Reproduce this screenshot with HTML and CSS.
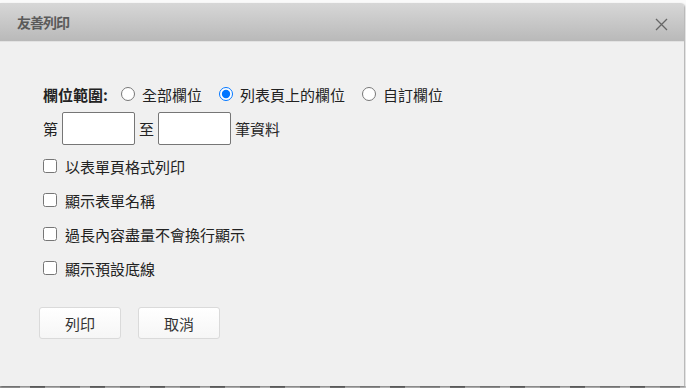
FILE: index.html
```html
<!DOCTYPE html>
<html lang="zh-Hant">
<head>
  <meta charset="UTF-8">
  <title>友善列印</title>
  <link rel="stylesheet" href="styles.css">
</head>
<body>
  <div class="dialog">
    <div class="dlg-head">
      <span class="dlg-title">友善列印</span>
      <span class="dlg-close">
        <svg width="13" height="13" viewBox="0 0 13 13"><path d="M1 1L12 12M12 1L1 12" stroke="#666" stroke-width="1.3" fill="none"/></svg>
      </span>
    </div>

    <div class="dlg-body">
      <div class="row">
        <b class="lbl">欄位範圍:</b>
        <label class="opt"><input type="radio" name="range"> 全部欄位</label>
        <label class="opt"><input type="radio" name="range" checked> 列表頁上的欄位</label>
        <label class="opt"><input type="radio" name="range"> 自訂欄位</label>
      </div>

      <div class="row rows">
        第 <input type="text" class="num"> 至 <input type="text" class="num"> 筆資料
      </div>

      <label class="chk"><input type="checkbox"> 以表單頁格式列印</label>
      <label class="chk"><input type="checkbox"> 顯示表單名稱</label>
      <label class="chk"><input type="checkbox"> 過長內容盡量不會換行顯示</label>
      <label class="chk"><input type="checkbox"> 顯示預設底線</label>

      <div class="btns">
        <button class="btn">列印</button>
        <button class="btn">取消</button>
      </div>
    </div>
  </div>
  <div class="under"></div>
</body>
</html>
```

FILE: styles.css
```css
html, body { margin: 0; padding: 0; background: #fafafa; }
body { font-family: "Noto Sans CJK TC", "Noto Sans", sans-serif; font-size: 15px; color: #222; height: 388px; overflow: hidden; }

.dialog { margin-top: 3px; width: 684px; height: 383px; background: #f0f0f0; border-radius: 0 4px 0 0; box-shadow: 1px 1px 2px rgba(0,0,0,.35); position: relative; z-index: 1; }
.dlg-head { height: 38px; display: flex; align-items: center; justify-content: space-between; padding: 0 16px 0 17px; background: linear-gradient(#d7d7d7, #b9b9b9); border-bottom: 1px solid #e2e2e2; border-radius: 0 4px 0 0; }
.dlg-title { font-size: 14px; font-weight: bold; color: #5a5a5a; margin-top: -1px; letter-spacing: -1px; }
.dlg-close { display: flex; margin-top: 4px; }

.dlg-body { padding: 41px 0 0 39px; }
.row { display: flex; align-items: center; height: 22px; }
.lbl { font-weight: bold; margin-left: 4px; margin-right: 8px; }
.opt { display: flex; align-items: center; margin-right: 12px; }
.opt input { margin: 0 7px 0 5px; width: 14px; height: 14px; }

.rows { margin-top: 6px; height: 34px; padding-left: 4px; }
.num { width: 73px; height: 33px; box-sizing: border-box; margin: 0 4px; border: 1px solid #767676; border-radius: 2px; background: #fff; padding: 2px; }

.chk { display: flex; align-items: center; height: 34px; padding-left: 3px; }
.chk:first-of-type { margin-top: 4px; }
.chk input { margin: 0 8px 0 1px; width: 14px; height: 14px; }

.btns { display: flex; gap: 17px; margin-top: 22px; }
.btn { width: 82px; height: 32px; font-family: inherit; font-size: 15px; color: #333; background: linear-gradient(#fff, #f6f6f6); border: 1px solid #dadada; border-radius: 3px; padding: 0; }

.under { position: absolute; left: 0; top: 386px; width: 686px; height: 2px; background: repeating-linear-gradient(90deg, #999 0 20px, #c8c8c8 20px 30px, #777 30px 45px, #bbb 45px 60px); }
```
